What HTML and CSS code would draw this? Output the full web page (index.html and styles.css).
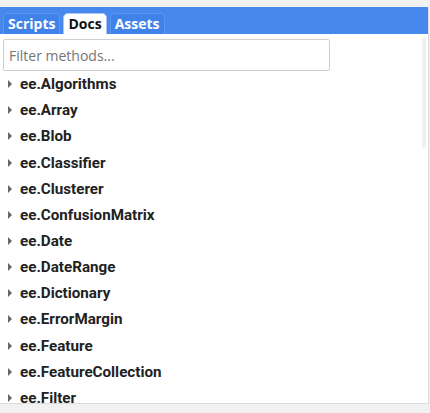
FILE: index.html
```html
<!DOCTYPE html>
<html>
<head>
<meta charset="utf-8">
<link rel="stylesheet" href="styles.css">
</head>
<body>
<div class="panel">
  <div class="tabbar">
    <div class="tab">Scripts</div>
    <div class="tab active">Docs</div>
    <div class="tab">Assets</div>
  </div>
  <div class="content">
    <div class="filter"><span class="placeholder">Filter methods...</span></div>
    <ul class="list">
      <li class="item"><span class="arrow"></span>ee.Algorithms</li>
      <li class="item"><span class="arrow"></span>ee.Array</li>
      <li class="item"><span class="arrow"></span>ee.Blob</li>
      <li class="item"><span class="arrow"></span>ee.Classifier</li>
      <li class="item"><span class="arrow"></span>ee.Clusterer</li>
      <li class="item"><span class="arrow"></span>ee.ConfusionMatrix</li>
      <li class="item"><span class="arrow"></span>ee.Date</li>
      <li class="item"><span class="arrow"></span>ee.DateRange</li>
      <li class="item"><span class="arrow"></span>ee.Dictionary</li>
      <li class="item"><span class="arrow"></span>ee.ErrorMargin</li>
      <li class="item"><span class="arrow"></span>ee.Feature</li>
      <li class="item"><span class="arrow"></span>ee.FeatureCollection</li>
      <li class="item"><span class="arrow"></span>ee.Filter</li>
    </ul>
    <div class="scrollbar"></div>
  </div>
</div>
</body>
</html>
```
FILE: styles.css
```css
html, body {
  margin: 0;
  padding: 0;
  background: #f1f1f1;
  width: 430px;
  height: 413px;
  overflow: hidden;
}
.panel {
  margin-top: 7px;
  width: 428px;
  height: 396px;
  background: #ffffff;
  border-right: 1px solid #dcdcdc;
  border-bottom: 1px solid #dcdcdc;
  display: flex;
  flex-direction: column;
  overflow: hidden;
}
.tabbar {
  height: 27px;
  flex: none;
  background: #4688ee;
  display: flex;
  align-items: flex-end;
  padding-left: 3px;
  gap: 3px;
  box-sizing: border-box;
}
.tab {
  height: 21px;
  box-sizing: border-box;
  padding: 0 4px;
  border: 1px solid #5a96f2;
  border-bottom: none;
  border-radius: 5px 5px 0 0;
  background: #3f82ea;
  color: #ffffff;
  font-family: "Open Sans", sans-serif;
  font-weight: 700;
  font-size: 14px;
  line-height: 20px;
}
.tab.active {
  background: #ffffff;
  color: #111111;
  border-color: #a9c6f5;
}
.content {
  position: relative;
  flex: 1;
  padding: 5px 0 0 3px;
}
.filter {
  width: 327px;
  height: 32px;
  box-sizing: border-box;
  border: 1px solid #cfcfcf;
  border-radius: 2px;
  padding-left: 5px;
  display: flex;
  align-items: center;
}
.placeholder {
  font-family: "Open Sans", sans-serif;
  font-size: 14px;
  color: #757575;
}
.list {
  list-style: none;
  margin: 0;
  padding: 0;
}
.item {
  height: 26.17px;
  display: flex;
  align-items: center;
  font-family: Roboto, sans-serif;
  font-weight: 700;
  font-size: 15.2px;
  color: #222222;
  padding-left: 5px;
}
.arrow {
  width: 0;
  height: 0;
  border-top: 4px solid transparent;
  border-bottom: 4px solid transparent;
  border-left: 4px solid #666666;
  margin-right: 8px;
}
.scrollbar {
  position: absolute;
  right: 2px;
  top: 3px;
  width: 4px;
  height: 111px;
  background: #f0f0f0;
  border-radius: 2px;
}
```
